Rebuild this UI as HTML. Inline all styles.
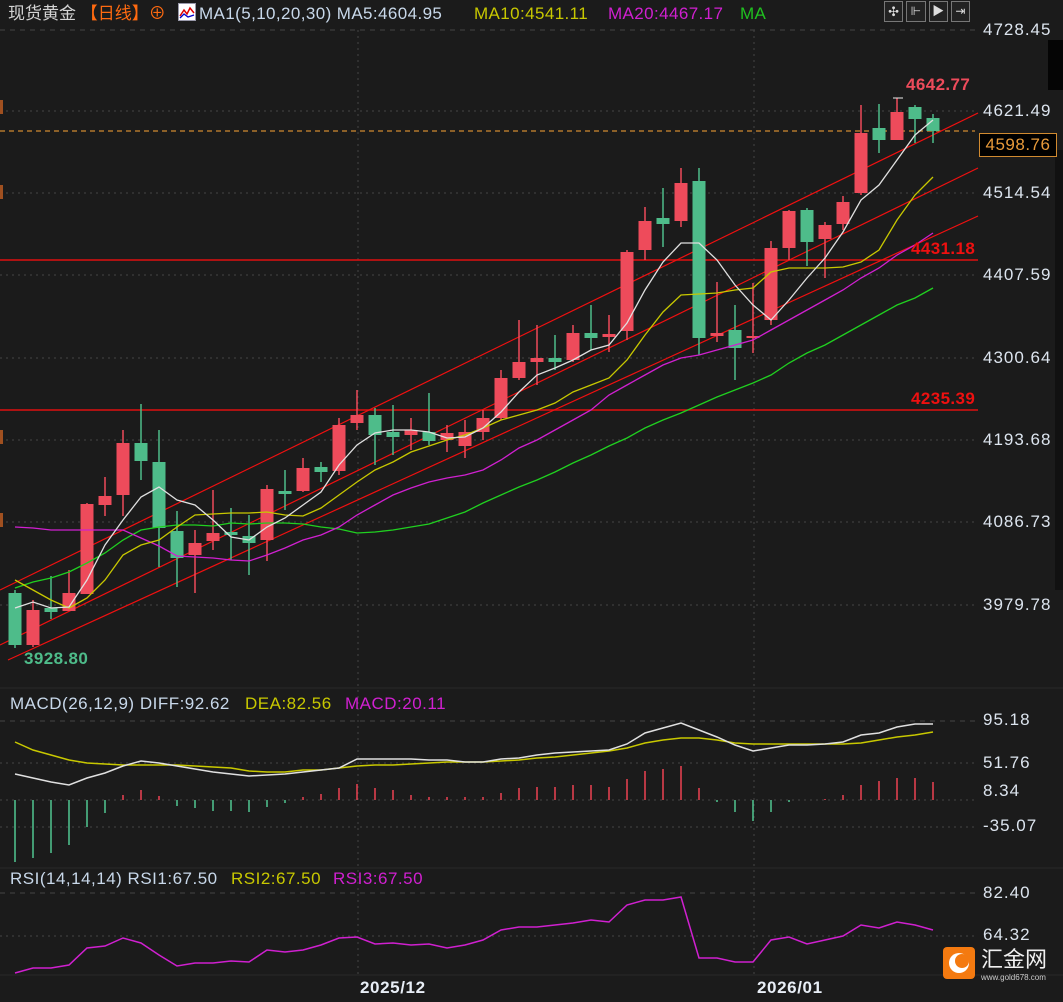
<!DOCTYPE html>
<html><head><meta charset="utf-8"><style>
html,body{margin:0;padding:0;background:#1b1b1b;}
#w{position:relative;width:1063px;height:1002px;overflow:hidden;background:#1b1b1b;font-family:"Liberation Sans","Noto Sans CJK SC",sans-serif;}
.t{position:absolute;white-space:nowrap;font-size:17px;line-height:18px;letter-spacing:0.4px;}
.ax{position:absolute;left:983px;color:#dce4ee;font-size:17px;line-height:18px;letter-spacing:1px;}
</style></head><body><div id="w">
<svg id="s" width="1063" height="1002" style="position:absolute;left:0;top:0">
<rect x="1055" y="150" width="8" height="440" fill="#111"/>
<rect x="1048" y="40" width="15" height="50" fill="#050505"/>
<g stroke="#444" stroke-dasharray="2,4" stroke-width="1">
<line x1="0" y1="30" x2="975" y2="30" stroke-dasharray="5,5"/>
<line x1="0" y1="111" x2="975" y2="111"/><line x1="0" y1="193" x2="975" y2="193"/>
<line x1="0" y1="275" x2="975" y2="275"/><line x1="0" y1="358" x2="975" y2="358"/>
<line x1="0" y1="440" x2="975" y2="440"/><line x1="0" y1="522" x2="975" y2="522"/>
<line x1="0" y1="605" x2="975" y2="605"/>
<line x1="0" y1="721" x2="975" y2="721" stroke-dasharray="5,5"/><line x1="0" y1="763" x2="975" y2="763"/>
<line x1="0" y1="800" x2="975" y2="800"/><line x1="0" y1="827" x2="975" y2="827"/>
<line x1="0" y1="893" x2="975" y2="893" stroke-dasharray="5,5"/><line x1="0" y1="936" x2="975" y2="936"/>
<line x1="358" y1="30" x2="358" y2="975"/><line x1="754" y1="30" x2="754" y2="975"/>
</g>
<line x1="0" y1="688" x2="1063" y2="688" stroke="#2a2a2a"/>
<line x1="0" y1="868" x2="1063" y2="868" stroke="#2a2a2a"/>
<line x1="0" y1="975" x2="1063" y2="975" stroke="#2a2a2a"/>
<line x1="0" y1="131" x2="975" y2="131" stroke="#d08a30" stroke-dasharray="5,4" stroke-width="1.3"/>
<g id="c"></g>
</svg>
<div class="t" style="left:8px;top:5px;color:#d4d4d4;letter-spacing:0">现货黄金 <span style="color:#ff6a10">【日线】</span><span style="color:#ff6a10">⊕</span></div>
<div style="position:absolute;left:178px;top:3px;width:16px;height:16px;background:#fff;border:1px solid #99a"><svg width="16" height="16"><polyline points="1,12 5,6 8,10 11,4 15,9" fill="none" stroke="#d00" stroke-width="1.5"/><polyline points="1,14 5,10 9,13 15,11" fill="none" stroke="#00c" stroke-width="1.3"/></svg></div>
<div class="t" style="left:199px;top:5px;color:#c8d8ea">MA1(5,10,20,30) MA5:4604.95</div>
<div class="t" style="left:474px;top:5px;color:#c8c800">MA10:4541.11</div>
<div class="t" style="left:608px;top:5px;color:#d020d0">MA20:4467.17</div>
<div class="t" style="left:740px;top:5px;color:#20c020">MA</div>
<div style="position:absolute;left:884px;top:1px;width:86px;height:21px;display:flex;gap:3px">
<div style="width:19px;height:19px;border:1px solid #777;background:#222;color:#ddd;font-size:13px;text-align:center;line-height:19px">✣</div>
<div style="width:19px;height:19px;border:1px solid #777;background:#222;color:#ddd;font-size:12px;text-align:center;line-height:19px">⊩</div>
<div style="width:19px;height:19px;border:1px solid #777;background:#222;color:#ddd;font-size:12px;text-align:center;line-height:19px">▶</div>
<div style="width:19px;height:19px;border:1px solid #777;background:#222;color:#ddd;font-size:12px;text-align:center;line-height:19px">⇥</div>
</div>
<div class="ax" style="top:21px">4728.45</div>
<div class="ax" style="top:102px">4621.49</div>
<div style="position:absolute;left:979px;top:133px;width:76px;height:22px;border:1px solid #d08a30;background:#000;color:#e89a3a;font-size:17px;letter-spacing:0.5px;line-height:22px;text-align:center">4598.76</div>
<div class="ax" style="top:184px">4514.54</div>
<div class="ax" style="top:266px">4407.59</div>
<div class="ax" style="top:349px">4300.64</div>
<div class="ax" style="top:431px">4193.68</div>
<div class="ax" style="top:513px">4086.73</div>
<div class="ax" style="top:596px">3979.78</div>
<div class="ax" style="top:711px">95.18</div>
<div class="ax" style="top:754px">51.76</div>
<div class="ax" style="top:782px">8.34</div>
<div class="ax" style="top:817px">-35.07</div>
<div class="ax" style="top:884px">82.40</div>
<div class="ax" style="top:926px">64.32</div>
<div class="t" style="left:906px;top:76px;color:#ee4b5b;font-weight:bold">4642.77</div>
<div class="t" style="left:911px;top:240px;color:#ee1010;font-weight:bold">4431.18</div>
<div class="t" style="left:911px;top:390px;color:#ee1010;font-weight:bold">4235.39</div>
<div class="t" style="left:24px;top:650px;color:#4ebc8a;font-weight:bold">3928.80</div>
<div class="t" style="left:10px;top:695px;color:#c8d8ea;letter-spacing:0.5px">MACD(26,12,9) DIFF:92.62</div>
<div class="t" style="left:245px;top:695px;color:#c8c800;letter-spacing:0.5px">DEA:82.56</div>
<div class="t" style="left:345px;top:695px;color:#d020d0;letter-spacing:0.5px">MACD:20.11</div>
<div class="t" style="left:10px;top:870px;color:#c8d8ea;letter-spacing:0.5px">RSI(14,14,14) RSI1:67.50</div>
<div class="t" style="left:231px;top:870px;color:#c8c800;letter-spacing:0.5px">RSI2:67.50</div>
<div class="t" style="left:333px;top:870px;color:#d020d0;letter-spacing:0.5px">RSI3:67.50</div>
<div class="t" style="left:360px;top:979px;color:#e8eef6;font-weight:bold;letter-spacing:0.6px">2025/12</div>
<div class="t" style="left:757px;top:979px;color:#e8eef6;font-weight:bold;letter-spacing:0.6px">2026/01</div>
<div style="position:absolute;left:943px;top:947px;width:32px;height:32px;border-radius:4px;background:#f47a10"><svg width="32" height="32"><circle cx="16" cy="16" r="10" fill="#fff"/><circle cx="19" cy="14" r="7" fill="#f47a10"/></svg></div>
<div class="t" style="left:981px;top:948px;color:#f0f0f0;font-size:22px;line-height:24px;letter-spacing:0">汇金网</div>
<div class="t" style="left:981px;top:973px;color:#ccc;font-size:8px;line-height:9px;letter-spacing:0">www.gold678.com</div>
<div style="position:absolute;left:0;top:100px;width:3px;height:14px;background:#a05020"></div>
<div style="position:absolute;left:0;top:430px;width:3px;height:14px;background:#a05020"></div>
<div style="position:absolute;left:0;top:513px;width:3px;height:14px;background:#a05020"></div>
<div style="position:absolute;left:0;top:185px;width:3px;height:14px;background:#a05020"></div>
</div>
<script>
var R="#ee4b5b",G="#4ebc8a",ns="http://www.w3.org/2000/svg",g=document.getElementById("c");
function el(t,a){var e=document.createElementNS(ns,t);for(var k in a)e.setAttribute(k,a[k]);g.appendChild(e);return e;}
var C=[[593,645,590,648,G],[610,645,600,647,R],[608,612,576,619,G],[593,611,570,611,R],[504,594,503,594,R],[496,505,477,516,R],[443,495,430,516,R],[443,461,404,480,G],[462,528,430,567,G],[531,558,511,587,G],[543,555,530,593,R],[533,541,490,550,R],[532,535,508,560,G],[536,543,515,575,G],[489,540,485,561,R],[491,494,470,510,G],[468,491,458,492,R],[467,472,462,482,G],[425,471,418,475,R],[415,423,390,430,R],[415,435,408,465,G],[432,437,405,455,G],[430,435,418,450,R],[432,441,393,445,G],[433,440,425,452,R],[432,446,420,458,R],[418,432,410,440,R],[378,418,370,420,R],[362,378,320,380,R],[358,362,325,385,R],[358,362,335,370,G],[333,360,325,362,R],[333,338,305,350,G],[334,337,315,352,R],[252,331,250,340,R],[221,250,207,260,R],[218,224,188,247,G],[183,221,168,227,R],[181,338,168,355,G],[333,336,282,342,R],[330,348,305,380,G],[336,338,283,353,R],[248,320,241,325,R],[211,248,210,260,R],[210,242,208,266,G],[225,239,222,278,R],[202,224,196,230,R],[133,193,105,195,R],[128,140,104,153,G],[112,140,98,140,R],[107,119,105,143,G],[118,131,114,143,G]];
function X(i){return 15+18*i;}
el("line",{x1:0,y1:260,x2:978,y2:260,stroke:"#e01010","stroke-width":1.5});
el("line",{x1:0,y1:410,x2:978,y2:410,stroke:"#e01010","stroke-width":1.5});
el("line",{x1:0,y1:590,x2:978,y2:113,stroke:"#f01010","stroke-width":1.2});
el("line",{x1:0,y1:645,x2:978,y2:168,stroke:"#f01010","stroke-width":1.2});
el("line",{x1:8,y1:660,x2:978,y2:216,stroke:"#f01010","stroke-width":1.2});
function pl(ys,col,w){var p=ys.map(function(y,i){return X(i)+","+y}).join(" ");el("polyline",{points:p,fill:"none",stroke:col,"stroke-width":w||1.3});}
C.forEach(function(c,i){var x=X(i),t=Math.min(c[0],c[1]),b=Math.max(c[0],c[1]);
el("line",{x1:x,y1:c[2],x2:x,y2:c[3],stroke:c[4],"stroke-width":1.5});
el("rect",{x:x-6.5,y:t,width:13,height:Math.max(b-t,2),fill:c[4]});});
pl([588,582,578,572,563,553,540,530,527,525,525,526,523,524,523,523,524,527,529,533,532,530,527,524,518,512,503,495,487,480,472,463,455,446,438,428,420,413,405,397,390,383,375,363,353,345,335,325,315,305,298,288],"#20d020");
pl([527,528,530,530,530,530,530,538,546,556,557,558,560,561,555,548,540,535,527,515,505,495,488,482,478,475,470,460,448,440,430,420,410,395,385,375,365,358,355,350,345,340,330,320,310,300,290,278,268,255,245,233],"#d020d0");
pl([580,590,600,608,598,580,555,545,540,527,515,514,513,513,512,515,516,508,495,482,470,462,452,446,440,435,428,420,415,410,403,392,385,378,360,335,312,295,294,293,290,288,272,268,268,268,267,262,250,220,195,177],"#c8c800");
pl([608,602,608,607,580,545,520,497,487,500,505,520,537,540,527,518,505,492,465,445,433,430,430,432,438,437,428,412,392,375,368,360,350,345,323,290,262,243,243,260,285,305,320,300,278,258,232,200,185,160,135,120],"#e0e0e0");
el("line",{x1:893,y1:98,x2:903,y2:98,stroke:"#eee"});
var M=[862,858,853,845,827,813,795,790,796,806,808,811,811,812,807,803,797,794,788,784,788,790,795,797,797,797,797,793,788,787,787,785,785,787,779,771,769,766,788,802,812,821,812,802,800,799,795,785,781,778,778,782];
M.forEach(function(y,i){var x=X(i);el("line",{x1:x,y1:800,x2:x,y2:y,stroke:y>800?G:"#e04050","stroke-width":1.6});});
pl([742,750,755,760,763,764,765,765,765,765,766,767,768,771,772,772,770,770,768,766,765,765,764,763,762,762,762,761,760,758,757,755,753,751,748,743,740,738,738,740,743,744,744,744,744,744,744,743,740,737,735,732],"#c8c800",1.5);
pl([774,778,782,785,778,773,766,761,763,766,769,772,774,776,775,774,772,770,768,759,759,759,759,760,760,762,762,759,758,755,753,752,751,750,744,733,728,723,730,737,745,751,748,745,745,744,742,735,733,727,724,724],"#e0e0e0",1.5);
pl([973,968,968,965,948,946,938,943,955,966,963,963,961,962,950,952,950,945,938,937,944,943,945,944,948,945,940,930,927,927,925,923,920,922,905,900,900,897,958,958,962,962,940,937,944,940,936,925,928,922,925,930],"#d020d0",1.5);
</script>
</body></html>
